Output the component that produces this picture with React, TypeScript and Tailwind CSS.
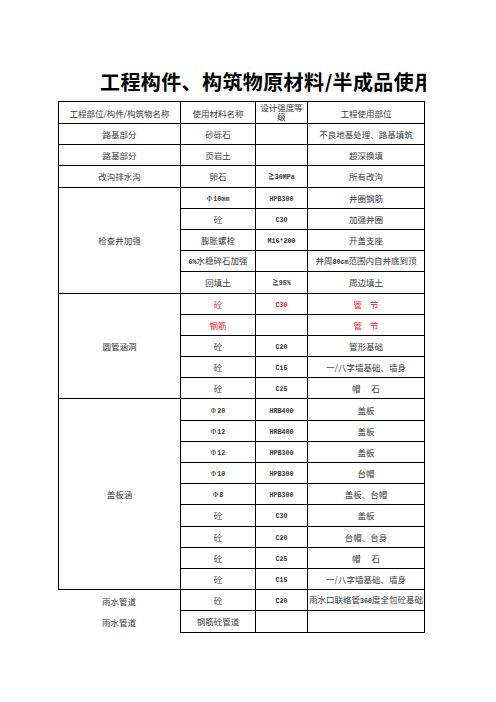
import type { ReactNode } from "react";

type Row = {
  part?: { label: string; span: number; open?: boolean };
  mat: ReactNode;
  grade: ReactNode;
  use: ReactNode;
  red?: boolean;
};

// latin runs are set in a small bold mono, like the sheet does
function Txt({ s }: { s: string }) {
  const parts = s.split(/([A-Za-z0-9%*≧]+|Φ)/);
  return (
    <span>
      {parts.map((p, i) =>
        i % 2 === 0 ? (
          p
        ) : p === "Φ" ? (
          <span key={i} className="font-['DejaVu_Serif',serif] text-[7px] mr-[1px]">
            Φ
          </span>
        ) : (
          <span key={i} className="font-['Liberation_Mono','Noto_Sans_CJK_SC',monospace] font-bold text-[6.7px]">
            {p}
          </span>
        )
      )}
    </span>
  );
}

function Gap({ a, b, w }: { a: string; b: string; w: "sm" | "lg" }) {
  return (
    <span className="inline-flex items-center">
      {a}
      <span className={w === "sm" ? "inline-block w-[8px]" : "inline-block w-[11px]"} />
      {b}
    </span>
  );
}

const rows: Row[] = [
  { part: { label: "路基部分", span: 1 }, mat: "砂砾石", grade: "", use: "不良地基处理、路基填筑" },
  { part: { label: "路基部分", span: 1 }, mat: "页岩土", grade: "", use: "超深换填" },
  { part: { label: "改沟排水沟", span: 1 }, mat: "卵石", grade: <Txt s="≧30MPa" />, use: "所有改沟" },
  { part: { label: "检查井加强", span: 5 }, mat: <Txt s="Φ10mm" />, grade: <Txt s="HPB300" />, use: "井圈钢筋" },
  { mat: "砼", grade: <Txt s="C30" />, use: "加强井圈" },
  { mat: "膨胀螺栓", grade: <Txt s="M16*200" />, use: "开盖支座" },
  { mat: <Txt s="6%水稳碎石加强" />, grade: "", use: <Txt s="井周80cm范围内自井底到顶" /> },
  { mat: "回填土", grade: <Txt s="≧95%" />, use: "周边填土" },
  { part: { label: "圆管涵洞", span: 5 }, mat: "砼", grade: <Txt s="C30" />, use: <Gap a="管" b="节" w="sm" />, red: true },
  { mat: "钢筋", grade: "", use: <Gap a="管" b="节" w="sm" />, red: true },
  { mat: "砼", grade: <Txt s="C20" />, use: "管形基础" },
  { mat: "砼", grade: <Txt s="C15" />, use: "一/八字墙基础、墙身" },
  { mat: "砼", grade: <Txt s="C25" />, use: <Gap a="帽" b="石" w="lg" /> },
  { part: { label: "盖板涵", span: 9 }, mat: <Txt s="Φ20" />, grade: <Txt s="HRB400" />, use: "盖板" },
  { mat: <Txt s="Φ12" />, grade: <Txt s="HRB400" />, use: "盖板" },
  { mat: <Txt s="Φ12" />, grade: <Txt s="HPB300" />, use: "盖板" },
  { mat: <Txt s="Φ10" />, grade: <Txt s="HPB300" />, use: "台帽" },
  { mat: <Txt s="Φ8" />, grade: <Txt s="HPB300" />, use: "盖板、台帽" },
  { mat: "砼", grade: <Txt s="C30" />, use: "盖板" },
  { mat: "砼", grade: <Txt s="C20" />, use: "台帽、台身" },
  { mat: "砼", grade: <Txt s="C25" />, use: <Gap a="帽" b="石" w="lg" /> },
  { mat: "砼", grade: <Txt s="C15" />, use: "一/八字墙基础、墙身" },
  { part: { label: "雨水管道", span: 1, open: true }, mat: "砼", grade: <Txt s="C20" />, use: <Txt s="雨水口联络管360度全包砼基础" /> },
  { part: { label: "雨水管道", span: 1, open: true }, mat: "钢筋砼管道", grade: "", use: "" },
];

const cell = "flex items-center justify-center whitespace-nowrap border-black";

export default function App() {
  return (
    <div className="w-[496px] h-[702px] bg-white font-['Noto_Sans_CJK_SC','Noto_Sans',sans-serif] text-[#3a3a3a]">
      {/* Title, clipped at the table's right edge */}
      <div className="w-[426px] overflow-hidden pt-[72px]">
        <h1 className="pl-[100px] whitespace-nowrap text-[20px] leading-[20px] tracking-[0.4px] font-bold text-black">
          工程构件、构筑物原材料/半成品使用情况一览表
        </h1>
      </div>

      <div className="ml-[58px] mt-[9px] w-[367px] grid grid-cols-[123px_75px_52px_117px] grid-rows-[22px_repeat(24,21.2px)] border-t border-black text-[8.5px] leading-[10px]">
        {/* Header */}
        <div className={`${cell} border-l border-r border-b`}>
          工程部位/构件/构筑物名称
        </div>
        <div className={`${cell} border-r border-b`}>使用材料名称</div>
        <div className={`${cell} border-r border-b flex-col justify-start pt-[1px] leading-[9px] text-center`}>
          <span>设计强度等</span>
          <span>级</span>
        </div>
        <div className={`${cell} border-r border-b`}>工程使用部位</div>

        {rows.map((r, i) => {
          const tone = r.red ? "text-[#ff1a1a]" : "";
          return [
            r.part ? (
              <div
                key={`p${i}`}
                className={`${cell} ${r.part.open ? "border-r" : "border-l border-r border-b"} ${
                  r.part.span === 5 ? "row-span-5" : r.part.span === 9 ? "row-span-9" : ""
                }`}
              >
                {r.part.label}
              </div>
            ) : null,
            <div key={`m${i}`} className={`${cell} border-r border-b ${tone}`}>
              {r.mat}
            </div>,
            <div key={`g${i}`} className={`${cell} border-r border-b ${tone}`}>
              {r.grade}
            </div>,
            <div key={`u${i}`} className={`${cell} border-r border-b ${tone}`}>
              {r.use}
            </div>,
          ];
        })}
      </div>
    </div>
  );
}
